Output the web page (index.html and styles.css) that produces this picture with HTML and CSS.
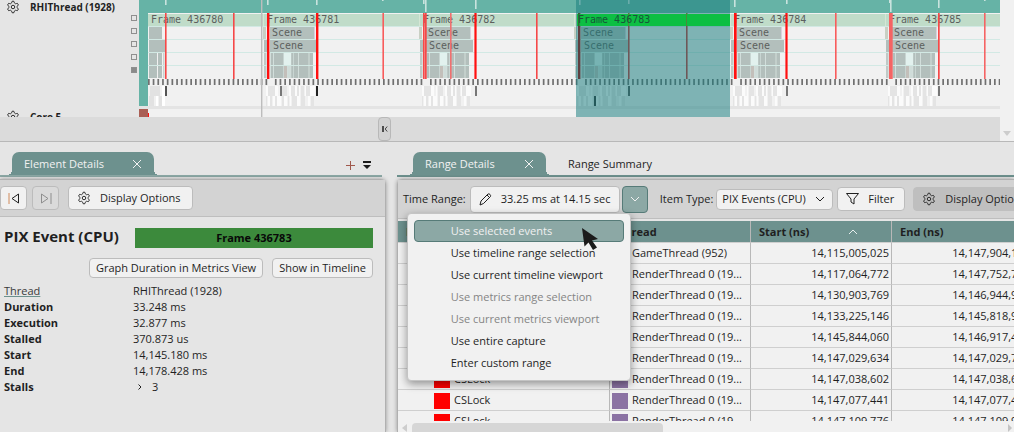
FILE: index.html
```html
<!DOCTYPE html>
<html lang="en">
<head>
  <meta charset="UTF-8">
  <meta name="viewport" content="width=device-width, initial-scale=1.0">
  <title>Timing Capture</title>
  <link rel="stylesheet" href="styles.css">
</head>
<body>

<!-- Shared icons -->
<svg class="sprite" aria-hidden="true">
  <symbol id="gear" viewBox="0 0 24 24">
    <path d="M12.22 2h-.44a2 2 0 0 0-2 2v.18a2 2 0 0 1-1 1.73l-.43.25a2 2 0 0 1-2 0l-.15-.08a2 2 0 0 0-2.73.73l-.22.38a2 2 0 0 0 .73 2.73l.15.1a2 2 0 0 1 1 1.72v.51a2 2 0 0 1-1 1.74l-.15.09a2 2 0 0 0-.73 2.73l.22.38a2 2 0 0 0 2.73.73l.15-.08a2 2 0 0 1 2 0l.43.25a2 2 0 0 1 1 1.73V20a2 2 0 0 0 2 2h.44a2 2 0 0 0 2-2v-.18a2 2 0 0 1 1-1.73l.43-.25a2 2 0 0 1 2 0l.15.08a2 2 0 0 0 2.73-.73l.22-.39a2 2 0 0 0-.73-2.73l-.15-.08a2 2 0 0 1-1-1.74v-.5a2 2 0 0 1 1-1.74l.15-.09a2 2 0 0 0 .73-2.73l-.22-.38a2 2 0 0 0-2.73-.73l-.15.08a2 2 0 0 1-2 0l-.43-.25a2 2 0 0 1-1-1.73V4a2 2 0 0 0-2-2z"/>
    <circle cx="12" cy="12" r="3"/>
  </symbol>
  <symbol id="cross" viewBox="0 0 10 10"><path d="M1 1l8 8M9 1L1 9"/></symbol>
  <symbol id="chevron" viewBox="0 0 10 10"><path d="M1 3l4 4 4-4"/></symbol>
</svg>

<section class="timeline">
  <div class="lanes">
    <div class="lane-names">
      <div class="lane lane-thread">
        <svg class="icon gear"><use href="#gear"/></svg>
        <strong>RHIThread (1928)</strong>
        <div class="levels"><i></i><i></i><i></i><i></i><i class="on"></i></div>
      </div>
      <div class="lane lane-core">
        <svg class="icon gear"><use href="#gear"/></svg>
        <strong>Core 5</strong>
      </div>
    </div>
    <div class="track">
      <svg id="chart" width="861" height="117" viewBox="139 0 861 117"></svg>
    </div>
  </div>
  <div class="splitter">
    <button type="button" aria-label="Collapse lanes">
      <svg width="6" height="6" viewBox="0 0 6 6"><path d="M1 0v6" stroke-width="1.500"/><path d="M5.200 .5l-2 2.500 2 2.500" stroke-width=".8"/></svg>
    </button>
  </div>
  <div class="vscroll"><span></span></div>
</section>

<main class="docks">
  <section class="dock element-dock">
    <header class="tabs">
      <div class="tab active">Element Details
        <button type="button" aria-label="Close tab"><svg class="icon cross"><use href="#cross"/></svg></button>
      </div>
      <div class="tab-tools">
        <button type="button" aria-label="Add tab"><svg width="9" height="9" viewBox="0 0 9 9"><path d="M4 0h1v4h4v1H5v4H4V5H0V4h4z" fill="#a0584c"/></svg></button>
        <button type="button" aria-label="Tab list"><svg width="8" height="8" viewBox="0 0 8 8"><path d="M0 0h8v2H0zM0 4h8l-4 4z" fill="#1b1b1b"/></svg></button>
      </div>
    </header>
    <div class="panel">
      <div class="toolbar">
        <button class="btn step" type="button" aria-label="Previous event">
          <svg width="12" height="11" viewBox="0 0 12 11"><path d="M1 0v11" stroke="#d08a5a"/><path d="M10.500 1v9L4 5.500z"/></svg>
        </button>
        <button class="btn step" type="button" aria-label="Next event" disabled>
          <svg width="12" height="11" viewBox="0 0 12 11"><path d="M11 0v11"/><path d="M1.500 1v9L8 5.500z"/></svg>
        </button>
        <button class="btn options" type="button"><svg class="icon gear"><use href="#gear"/></svg>Display Options</button>
      </div>
      <div class="details">
        <div class="title-row">
          <h2>PIX Event (CPU)</h2>
          <div class="event-name">Frame 436783</div>
        </div>
        <div class="actions">
          <button class="btn" type="button">Graph Duration in Metrics View</button>
          <button class="btn" type="button">Show in Timeline</button>
        </div>
        <dl>
          <dt><a href="#thread">Thread</a></dt><dd>RHIThread (1928)</dd>
          <dt>Duration</dt><dd>33.248 ms</dd>
          <dt>Execution</dt><dd>32.877 ms</dd>
          <dt>Stalled</dt><dd>370.873 us</dd>
          <dt>Start</dt><dd>14,145.180 ms</dd>
          <dt>End</dt><dd>14,178.428 ms</dd>
          <dt>Stalls</dt><dd class="expand"><svg width="4" height="6" viewBox="0 0 4 6"><path d="M.5 .5L3 3 .5 5.500"/></svg>3</dd>
        </dl>
      </div>
    </div>
  </section>

  <section class="dock range-dock">
    <header class="tabs">
      <div class="tab active">Range Details
        <button type="button" aria-label="Close tab"><svg class="icon cross"><use href="#cross"/></svg></button>
      </div>
      <div class="tab">Range Summary</div>
    </header>
    <div class="panel">
      <div class="toolbar">
        <span>Time Range:</span>
        <div class="range-picker">
          <button class="btn range" type="button">
            <svg width="13" height="13" viewBox="0 0 13 13"><path d="M1 12l1-4 7-7c1-.8 3.300 1 2.500 2.500l-7 7zM8 2l3 3"/></svg>33.25 ms at 14.15 sec
          </button>
          <button class="btn drop" type="button" aria-label="Choose range"><svg class="icon chev"><use href="#chevron"/></svg></button>
          <div class="menu" role="menu">
            <button type="button" class="current">Use selected events
              <svg class="pointer" width="18" height="24" viewBox="0 0 18 24"><path d="M1 1l16 11-6 1.500 5 7-4 2.500-4.500-7.500-4 4z"/></svg>
            </button>
            <button type="button">Use timeline range selection</button>
            <button type="button">Use current timeline viewport</button>
            <button type="button" disabled>Use metrics range selection</button>
            <button type="button" disabled>Use current metrics viewport</button>
            <button type="button">Use entire capture</button>
            <button type="button">Enter custom range</button>
          </div>
        </div>
        <span class="divider"></span>
        <label for="itemType">Item Type:</label>
        <div class="select">
          <select id="itemType"><option>PIX Events (CPU)</option></select>
          <svg class="icon chev"><use href="#chevron"/></svg>
        </div>
        <button class="btn filter" type="button">
          <svg width="13" height="12" viewBox="0 0 13 12"><path d="M.5 .5h12L8 6v5l-3-2V6z"/></svg>Filter
        </button>
        <button class="btn options pressed" type="button"><svg class="icon gear"><use href="#gear"/></svg>Display Options</button>
      </div>
      <div class="grid">
        <table>
          <thead>
            <tr>
              <th class="name">Name</th>
              <th class="thread">Thread</th>
              <th class="time">Start (ns) <svg class="icon sort"><use href="#chevron"/></svg></th>
              <th class="time">End (ns)</th>
            </tr>
          </thead>
          <tbody id="events"></tbody>
        </table>
      </div>
      <div class="hscroll"><i class="left"></i><span></span><i class="right"></i></div>
    </div>
  </section>
</main>

<script src="script.js"></script>
</body>
</html>
```

FILE: styles.css
```css
* {
  box-sizing: border-box;
}

body {
  margin: 0;
  height: 100vh;
  display: flex;
  flex-direction: column;
  overflow: hidden;
  background: #e5e5e5;
  color: #1f1f1f;
  font: 11px/16px "Open Sans", "Noto Sans", sans-serif;
}

button, select {
  font: inherit;
  color: inherit;
}

button {
  display: flex;
  align-items: center;
  padding: 0;
  border: 0;
  background: none;
  white-space: nowrap;
}

svg {
  display: block;
  flex: none;
  fill: none;
  stroke: currentColor;
}

.sprite {
  position: absolute;
  width: 0;
  height: 0;
}

.gear {
  width: 14px;
  height: 14px;
  stroke-width: 1.6;
}

.cross {
  width: 10px;
  height: 10px;
}

.chev {
  width: 10px;
  height: 10px;
}

/* Timeline */
.timeline {
  flex: none;
  display: grid;
  grid-template-columns: 1fr 14px;
  border-bottom: 1px solid #b8b8b8;
}

.lanes {
  display: flex;
  height: 117px;
  overflow: hidden;
}

.lane-names {
  flex: none;
  width: 139px;
}

.lane {
  display: flex;
  align-items: flex-start;
  gap: 10px;
  padding: 0 0 0 6px;
}

.lane strong {
  font-size: 10px;
  line-height: 14px;
  white-space: nowrap;
}

.lane-thread {
  height: 109px;
  position: relative;
}

.lane-core {
  padding-top: 1px;
}

.levels {
  position: absolute;
  right: 2px;
  top: 15px;
  display: grid;
  gap: 7px;
}

.levels i {
  width: 6px;
  height: 6px;
  border: 1px solid #8f8f8f;
}

.levels .on {
  background: #8a8a8a;
}

.track {
  flex: 1;
  min-width: 0;
  overflow: hidden;
  background: #f1f1f1;
}

#chart {
  stroke: none;
}

#chart text {
  font: 10px "DejaVu Sans Mono", monospace;
  fill: #5c5f5e;
}

.splitter {
  grid-row: 2;
  height: 24px;
  padding-left: 378px;
  background: #dbdbdb;
}

.splitter button {
  width: 13px;
  height: 24px;
  justify-content: center;
  border: 1px solid #b8b8b8;
  border-radius: 4px;
  background: #d2d2d2;
}

.vscroll {
  grid-column: 2;
  grid-row: 1 / 3;
  display: flex;
  align-items: flex-end;
  justify-content: center;
  padding-bottom: 5px;
  background: #f1f1f1;
}

.vscroll span {
  border: 4px solid transparent;
  border-top: 5px solid #cdcdcd;
  border-bottom: 0;
}

/* Docks */
.docks {
  flex: 1;
  min-height: 0;
  display: flex;
  gap: 11px;
}

.dock {
  display: flex;
  flex-direction: column;
}

.element-dock {
  flex: none;
  width: 386px;
}

.range-dock {
  flex: 1;
  min-width: 0;
}

.tabs {
  display: flex;
  align-items: flex-end;
  flex: none;
  height: 35px;
  margin-bottom: 2px;
  padding-left: 16px;
  border-bottom: 2px solid #6d918e;
}

.element-dock .tabs {
  padding-left: 12px;
  margin-right: 4px;
  border-color: #8ca8a5;
}

.tab {
  display: flex;
  align-items: center;
  height: 23px;
  padding: 0 22px;
  white-space: nowrap;
}

.tab.active {
  position: relative;
  width: 142px;
  padding: 0 12px;
  justify-content: space-between;
  border-radius: 7px 7px 0 0;
  background: #6d918e;
  color: #f2f2f2;
}

.range-dock .tab.active {
  width: 133px;
}

/* Flared feet of the tab */
.tab.active::before,
.tab.active::after {
  content: "";
  position: absolute;
  bottom: 0;
  width: 5px;
  height: 5px;
}

.tab.active::before {
  left: -5px;
  background: radial-gradient(circle at 0 0, transparent 5px, #6d918e 5px);
}

.tab.active::after {
  right: -5px;
  background: radial-gradient(circle at 100% 0, transparent 5px, #6d918e 5px);
}

.tab-tools {
  display: flex;
  align-items: center;
  gap: 8px;
  height: 20px;
  margin-left: auto;
  padding-right: 11px;
}

.tab-tools svg {
  stroke: none;
}

.panel {
  flex: 1;
  min-height: 0;
  display: flex;
  flex-direction: column;
  border: 1px solid #b0b0b0;
  border-bottom: 0;
  box-shadow: 0 0 4px rgba(0, 0, 0, 0.35);
}

.element-dock .panel {
  border-left: 0;
  border-radius: 0 5px 0 0;
}

.range-dock .panel {
  border-right: 0;
  border-radius: 5px 0 0 0;
}

.toolbar {
  flex: none;
  display: flex;
  align-items: center;
  height: 37px;
  border-bottom: 1px solid #bebebe;
  background: #d3d3d3;
  white-space: nowrap;
}

.btn {
  flex: none;
  height: 24px;
  border: 1px solid #bcbcbc;
  border-radius: 4px;
  background: #f1f1f1;
}

.step {
  width: 27px;
  margin-right: 5px;
  justify-content: center;
}

.step:disabled {
  background: #dadada;
  color: #8e8e8e;
}

.options {
  width: 125px;
  margin-left: 4px;
  padding-left: 8px;
  gap: 9px;
}

.options.pressed {
  margin-left: 8px;
  border-color: #bfbfbf;
  background: #bfbfbf;
}

/* Element details */
.details {
  padding: 11px 12px 0 4px;
}

.title-row {
  display: flex;
  align-items: flex-start;
  gap: 16px;
}

h2 {
  margin: 0;
  font-size: 15px;
  line-height: 16px;
  white-space: nowrap;
}

.event-name {
  flex: 1;
  background: #3c8a3c;
  color: #080808;
  font-weight: bold;
  line-height: 20px;
  text-align: center;
}

.actions {
  display: flex;
  justify-content: flex-end;
  gap: 9px;
  margin: 10px 0 5px;
}

.actions .btn {
  height: 20px;
  padding: 0 6px;
}

dl {
  display: grid;
  grid-template-columns: 129px 1fr;
  margin: 0;
}

dt {
  font-weight: bold;
}

dt a {
  color: #3a3a3a;
  font-weight: normal;
  text-decoration-color: #6d918e;
}

dd {
  margin: 0;
}

.expand {
  display: flex;
  align-items: center;
  gap: 10px;
  padding-left: 5px;
}

/* Range details */
.range-dock .toolbar {
  height: 39px;
  padding-left: 5px;
}

.range-picker {
  position: relative;
  display: flex;
  gap: 2px;
  margin-left: 4px;
}

.range {
  width: 150px;
  height: 27px;
  padding-left: 8px;
  gap: 9px;
}

.drop {
  width: 26px;
  height: 27px;
  justify-content: center;
  border-color: #567b78;
  background: #8ca8a5;
  color: #f1f1f1;
}

.menu {
  position: absolute;
  z-index: 2;
  left: -63px;
  top: 27px;
  width: 224px;
  padding: 6px;
  border: 1px solid #c4c4c4;
  border-radius: 4px;
  background: #f1f1f1;
  box-shadow: 0 3px 8px rgba(0, 0, 0, 0.4);
}

.menu button {
  width: 100%;
  height: 22px;
  padding-left: 36px;
  border: 1px solid transparent;
  border-radius: 4px;
}

.menu .current {
  position: relative;
  border-color: #567b78;
  background: #8ca8a5;
  color: #f1f1f1;
}

.menu button:disabled {
  color: #858585;
}

.pointer {
  position: absolute;
  right: 24px;
  top: 6px;
  fill: #1b1b1b;
  stroke: none;
}

.divider {
  width: 1px;
  height: 28px;
  margin: 0 6px;
  background: #bcbcbc;
}

.select {
  position: relative;
  margin: 0 4px 0 3px;
}

.select select {
  display: block;
  width: 117px;
  height: 21px;
  padding: 0 5px;
  appearance: none;
  border: 1px solid #bcbcbc;
  border-radius: 4px;
  background: #f1f1f1;
}

.select svg {
  position: absolute;
  right: 8px;
  top: 5px;
}

.filter {
  width: 68px;
  padding-left: 8px;
  gap: 9px;
}

.grid {
  flex: 1;
  min-height: 0;
  margin-top: 2px;
  overflow: hidden;
  background: #f1f1f1;
}

table {
  width: 635px;
  table-layout: fixed;
  border-collapse: separate;
  border-spacing: 0;
}

th, td {
  height: 21px;
  padding: 0 8px;
  border-right: 1px solid #b8b8b8;
  border-bottom: 1px solid #cfcfcf;
  line-height: 20px;
  text-align: left;
  white-space: nowrap;
}

th {
  height: 22px;
  background: #6d918e;
}

th.name {
  width: 212px;
}

th.thread {
  width: 141px;
}

th.time {
  width: 141px;
}

.sort {
  float: right;
  width: 10px;
  height: 10px;
  margin: 5px 25px 0 0;
  color: #e6eeed;
  transform: rotate(180deg);
}

td.name {
  padding-left: 36px;
}

td.thread {
  padding: 0 0 0 2px;
}

td.num {
  padding-right: 2px;
  text-align: right;
}

.swatch {
  display: inline-block;
  width: 16px;
  height: 16px;
  margin-right: 4px;
  vertical-align: middle;
  background: #8b72a3;
}

.swatch.lock {
  background: #ff0000;
}

.hscroll {
  flex: none;
  display: flex;
  align-items: center;
  height: 11px;
  padding: 2px 2px 0 4px;
  background: #f1f1f1;
}

.hscroll span {
  width: 251px;
  height: 9px;
  margin-left: 5px;
  border-radius: 4px 4px 0 0;
  background: #d6d6d6;
}

.hscroll i {
  border: 4px solid transparent;
}

.hscroll .left {
  border-left: 0;
  border-right: 5px solid #cdcdcd;
}

.hscroll .right {
  margin-left: auto;
  border-right: 0;
  border-left: 4px solid #c4c4c4;
}

.element-dock .tab.active button {
  margin-right: 0;
}
```

FILE: script.js
```js
const chart = document.getElementById('chart');
const svgNs = 'http://www.w3.org/2000/svg';

function rect(x, y, width, height, fill) {
  const el = document.createElementNS(svgNs, 'rect');
  const attrs = { x, y, width, height, fill };
  for (const key in attrs) el.setAttribute(key, attrs[key]);
  chart.appendChild(el);
  return el;
}

function label(x, y, content) {
  const el = document.createElementNS(svgNs, 'text');
  el.setAttribute('x', x);
  el.setAttribute('y', y);
  el.textContent = content;
  chart.appendChild(el);
  return el;
}

// Frame markers, in timeline pixels
const frames = [
  { id: 436781, x: 267 },
  { id: 436782, x: 423 },
  { id: 436783, x: 578 },
  { id: 436784, x: 734 },
  { id: 436785, x: 889 }
];
const selected = 436783;

// [x, width, colour] of every vertical sync line
const syncs = [
  [165, 1.6, '#f54848'], [233, 1.6, '#f54848'],
  [267, 2.4, '#ff1010'], [316, 2.4, '#ff1010'], [382.4, 1.6, '#f85c5c'],
  [423, 1.7, '#f54848'], [425, 1.7, '#f54848'], [450, 1.6, '#f07070'], [474.4, 2.2, '#ff1010'],
  [536, 1.6, '#f54848'], [578, 2.4, '#b00000'], [628, 1.6, '#d03030'], [686, 1.6, '#d03030'],
  [734, 2.7, '#ff1010'], [785.4, 2.2, '#ff1010'], [835, 1.6, '#f85c5c'],
  [889, 3.7, '#f56464'], [938, 1.7, '#f54848'], [984, 1.6, '#f56464']
];

// Lane background
rect(139, 0, 861, 13, '#66b3a6');
rect(148, 14, 852, 12, '#c0dcc9');
for (const y of [26, 39, 52, 65]) rect(148, y, 852, 1, '#d2e9e4');

// First frame, cut by the left edge
rect(149, 27, 13, 12, '#b3bfbc');
rect(149, 40, 16, 12, '#b3bfbc');
for (const y of [53, 66]) {
  rect(149, y, 8, 12, '#b3bfbc');
  rect(158, y, 4, 12, '#b3bfbc');
  rect(163, y, 1.5, 12, '#c9d3d0');
}
rect(150, 86, 10, 10, '#e2e2e2');
rect(162, 86, 3, 20, '#fff');
rect(149, 96, 5, 10, '#e2e2e2');
rect(156, 96, 2, 10, '#fff');
rect(159, 96, 3, 10, '#e2e2e2');
label(151, 23, 'Frame 436780');

for (const f of frames) {
  rect(f.x - 4, 14, 1, 12, '#d5e6d5');
  rect(f.x - 4, 27, 3, 12, '#c9d0c4');
  rect(f.x - 3, 40, 3, 12, '#b3bfbc');
  rect(f.x + 3, 27, 44, 12, '#b3bfbc');
  rect(f.x + 47, 27, 1, 12, '#d8d0dd');
  rect(f.x + 3, 40, 47, 12, '#b3bfbc');
  for (const y of [53, 66]) {
    rect(f.x - 3, y, 2.5, 12, '#c0cac7');
    rect(f.x + 3, y, 43, 12, '#d2dedb');
    for (const [dx, w] of [[4, 2], [7, 9.3], [24.3, 2], [27, 4], [32, 9.5], [42.5, 3.5]]) {
      rect(f.x + dx, y, w, 12, '#b3bfbc');
    }
  }
  rect(f.x + 17, 53, 7, 12, '#e2f1ee');
  rect(f.x + 17, 66, 3, 12, '#c3bfba');
  rect(f.x + 21, 66, 2, 12, '#cfdcd9');
  // Context switches below the event levels
  for (const [dx, w] of [[-1, 2], [8, 3], [13, 1], [22, 2], [28, 2], [32, 1], [38, 1], [43, 5]]) {
    rect(f.x + dx, 86, w, 10, '#fbfbfb');
  }
  for (const [dx, w] of [[1, 7], [15, 5], [24, 4], [30, 2], [34, 3], [39, 4]]) {
    rect(f.x + dx, 86, w, 10, '#e4e4e4');
  }
  for (const [dx, w] of [[1, 2], [6, 2], [10, 4], [17, 3], [23, 1], [30, 3], [41, 2]]) {
    rect(f.x + dx, 96, w, 10, '#fbfbfb');
  }
  for (const [dx, w] of [[-1, 1], [3, 2], [8, 2], [15, 2], [21, 1], [25, 5], [34, 4], [44, 3]]) {
    rect(f.x + dx, 96, w, 10, '#e4e4e4');
  }
  if (f.id !== selected) label(f.x, 23, 'Frame ' + f.id);
  label(f.x + 5, 36, 'Scene');
  label(f.x + 6, 49, 'Scene');
}

for (const [x, w, colour] of syncs) rect(x, 13, w, 66, colour);

// Context switch ticks
for (let x = 148; x < 1000; x += 4.7) {
  if (frames.some(f => x > f.x + 0.5 && x < f.x + 4)) continue;
  rect(x, 79, 1.7, 6, '#707070');
}
for (const [x, y, c] of [[165, 86, '#555'], [280, 86, '#777'], [316, 86, '#222'], [475, 86, '#777'],
  [594, 96, '#333'], [628, 86, '#555'], [786, 86, '#777'], [938, 86, '#777']]) {
  rect(x, y, 2, 10, c);
}

// Notches in the thread state band
for (const [x, h] of [[165, 5], [267, 5], [316, 5], [382, 1], [423, 4], [425, 12], [475, 9],
  [579, 5], [628, 4], [734, 7], [786, 4], [889, 3], [890, 12], [938, 8], [984, 1]]) {
  rect(x, 0, 1.6, h, '#c9e3de');
}

rect(139, 0, 9, 106, '#66b3a6');
rect(139, 106, 861, 3, '#e4e4e4');
rect(139, 109, 9, 8, '#aa5f55');
rect(148, 113, 1, 4, '#ff1010');
rect(261, 0, 1.4, 117, '#bdbdbd');

// Selected range
rect(576, 0, 154, 117, 'rgba(21, 123, 125, 0.52)');
rect(577, 14, 153, 12, '#0cbf43');
rect(578, 13, 1.5, 13, '#2f6a35');
rect(628, 13, 1, 13, '#4b8a3a');
rect(686, 13, 1, 13, '#4b8a3a');
label(578, 23, 'Frame ' + selected).style.fill = '#17553a';

// Event rows
const events = [
  ['', 'GameThread (952)', '14,115,005,025', '14,147,904,113'],
  ['', 'RenderThread 0 (19...', '14,117,064,772', '14,147,752,771'],
  ['', 'RenderThread 0 (19...', '14,130,903,769', '14,146,944,960'],
  ['', 'RenderThread 0 (19...', '14,133,225,146', '14,145,818,925'],
  ['', 'RenderThread 0 (19...', '14,145,844,060', '14,146,917,482'],
  ['', 'RenderThread 0 (19...', '14,147,029,634', '14,147,029,734'],
  ['CSLock', 'RenderThread 0 (19...', '14,147,038,602', '14,147,038,663'],
  ['CSLock', 'RenderThread 0 (19...', '14,147,077,441', '14,147,077,482'],
  ['CSLock', 'RenderThread 0 (19...', '14,147,109,776', '14,147,109,917']
];

document.getElementById('events').innerHTML = events.map(([name, thread, start, end]) => `
  <tr>
    <td class="name"><span class="swatch lock"></span>${name}</td>
    <td class="thread"><span class="swatch"></span>${thread}</td>
    <td class="num">${start}</td>
    <td class="num">${end}</td>
  </tr>`).join('');
```
